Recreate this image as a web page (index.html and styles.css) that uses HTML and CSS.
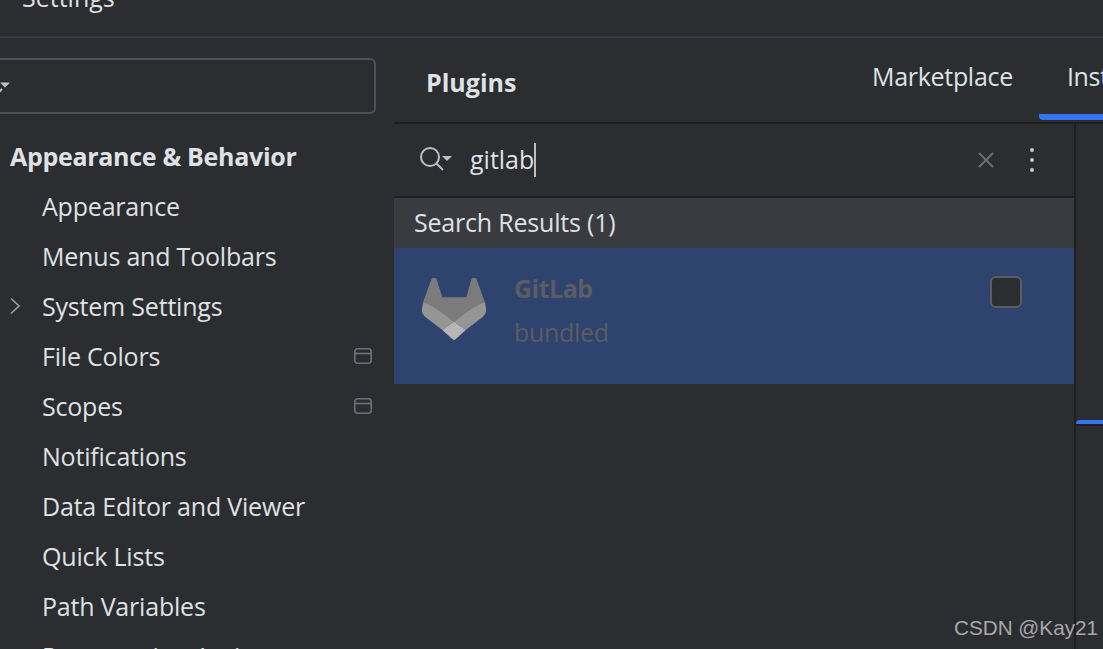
FILE: index.html
```html
<!DOCTYPE html>
<html lang="en">
<head>
  <meta charset="UTF-8">
  <title>Settings - Plugins</title>
  <link rel="stylesheet" href="styles.css">
</head>
<body>

  <!-- Title bar, cut off by the top of the screenshot -->
  <div class="titlebar"><span>Settings</span></div>

  <div class="content">

    <!-- Left settings tree -->
    <div class="sidebar">
      <div class="tree-search">
        <svg class="tree-search-caret" width="12" height="12" viewBox="0 0 12 12">
          <path d="M0 2.500H10L5 7.500Z" fill="#bfc1c6"/>
          <path d="M-1 12L2 9" stroke="#bfc1c6" stroke-width="2" fill="none"/>
        </svg>
      </div>
      <div class="tree-row tree-head">Appearance &amp; Behavior</div>
      <div class="tree-row">Appearance</div>
      <div class="tree-row">Menus and Toolbars</div>
      <div class="tree-row">
        <svg class="tree-arrow" width="12" height="18" viewBox="0 0 12 18">
          <path d="M2 1.500L10 9L2 16.500" stroke="#9a9ca1" stroke-width="1.700" fill="none"/>
        </svg>
        System Settings
      </div>
      <div class="tree-row">
        File Colors
        <svg class="tree-badge" width="20" height="18" viewBox="0 0 20 18">
          <rect x="1.800" y="1.800" width="16.400" height="14.400" rx="3" stroke="#6f7277" stroke-width="1.600" fill="none"/>
          <path d="M2 6.500H18" stroke="#6f7277" stroke-width="1.600"/>
        </svg>
      </div>
      <div class="tree-row">
        Scopes
        <svg class="tree-badge" width="20" height="18" viewBox="0 0 20 18">
          <rect x="1.800" y="1.800" width="16.400" height="14.400" rx="3" stroke="#6f7277" stroke-width="1.600" fill="none"/>
          <path d="M2 6.500H18" stroke="#6f7277" stroke-width="1.600"/>
        </svg>
      </div>
      <div class="tree-row">Notifications</div>
      <div class="tree-row">Data Editor and Viewer</div>
      <div class="tree-row">Quick Lists</div>
      <div class="tree-row">Path Variables</div>
      <div class="tree-row">Presentation Assistant</div>
    </div>

    <!-- Plugins panel -->
    <div class="panel">
      <div class="panel-header">
        <div class="panel-title">Plugins</div>
        <div class="tabs">
          <div class="tab">Marketplace</div>
          <div class="tab tab-active">Installed</div>
        </div>
      </div>

      <div class="panel-body">
        <div class="plugin-list">
          <div class="search-row">
            <svg class="search-icon" width="34" height="28" viewBox="0 0 34 28">
              <circle cx="11" cy="11" r="9" stroke="#bcbec3" stroke-width="2" fill="none"/>
              <path d="M17.500 17.500L24 24" stroke="#bcbec3" stroke-width="2" fill="none"/>
              <path d="M23 10H33L28 15Z" fill="#bcbec3"/>
            </svg>
            <span class="search-text">gitlab</span><span class="caret"></span>
            <svg class="search-clear" width="18" height="18" viewBox="0 0 18 18">
              <path d="M2 2L16 16M16 2L2 16" stroke="#6c6e72" stroke-width="2" fill="none"/>
            </svg>
            <div class="search-more"><i></i><i></i><i></i></div>
          </div>

          <div class="results-head">Search Results (1)</div>

          <div class="plugin-row">
            <svg class="plugin-logo" width="66" height="64" viewBox="0 0 66 64">
              <path d="M14 0.700C15.500 0.700 16.500 1.700 17 3.500L22.300 20.300H46.300L51 3.500C51.500 1.700 52.500 0.700 54 0.700C55.500 0.700 56.500 1.700 57 3.500L65 25.300L34 44.700L3 25.300L11 3.500C11.500 1.700 12.500 0.700 14 0.700Z" fill="#7b7b7b"/>
              <path d="M3 25.300C12 28 22 36 34 44.700L22.300 53L6 40.500C2.500 37.500 1.500 35 2 31.500Z" fill="#959595"/>
              <path d="M65 25.300C56 28 46 36 34 44.700L45.700 53L62 40.500C65.500 37.500 66.500 35 66 31.500Z" fill="#959595"/>
              <path d="M34 44.700L45.700 53L35.500 62.300C34.500 63.200 33.500 63.200 32.500 62.300L22.300 53Z" fill="#b6b6b6"/>
            </svg>
            <div class="plugin-info">
              <div class="plugin-name">GitLab</div>
              <div class="plugin-note">bundled</div>
            </div>
            <div class="plugin-check"></div>
          </div>
        </div>

        <!-- Details pane, only its left edge is visible -->
        <div class="detail">
          <div class="detail-tabs"></div>
          <div class="detail-marker"></div>
          <div class="detail-rule"></div>
        </div>
      </div>
    </div>

  </div>

  <div class="watermark">CSDN @Kay21</div>

</body>
</html>
```

FILE: styles.css
```css
html, body {
  height: 100%;
}

body {
  margin: 0;
  width: 1103px;
  height: 649px;
  overflow: hidden;
  position: relative;
  background: #2b2d30;
  color: #dfe1e5;
  font-family: "Open Sans", "Noto Sans", sans-serif;
  font-size: 25px;
  letter-spacing: -0.2px;
  display: flex;
  flex-direction: column;
}

.titlebar {
  height: 36px;
  flex: none;
  border-bottom: 2px solid #393b40;
  padding-left: 22px;
  overflow: hidden;
  line-height: 1;
  letter-spacing: 0;
}

.titlebar span {
  display: block;
  margin-top: -15px;
}

.content {
  flex: 1;
  display: flex;
  min-height: 0;
}

.sidebar {
  width: 394px;
  flex: none;
  overflow: hidden;
}

.tree-search {
  height: 52px;
  margin: 20px 18px 0 -12px;
  border: 2px solid #4e5157;
  border-radius: 6px;
  display: flex;
  align-items: center;
  padding-left: 10px;
}

.tree-search-caret {
  overflow: visible;
}

.tree-row {
  height: 50px;
  line-height: 48px;
  padding-left: 42px;
  white-space: nowrap;
  position: relative;
}

.tree-head {
  padding-left: 10px;
  font-weight: 700;
  margin-top: 18px;
  letter-spacing: -0.3px;
}

.tree-arrow {
  position: absolute;
  left: 9px;
  top: 15px;
}

.tree-badge {
  position: absolute;
  left: 353px;
  top: 15px;
}

.panel {
  flex: 1;
  min-width: 0;
  display: flex;
  flex-direction: column;
}

.panel-header {
  height: 84px;
  flex: none;
  border-bottom: 2px solid #1e1f22;
  display: flex;
  justify-content: space-between;
  overflow: hidden;
}

.panel-title {
  padding: 26px 0 0 32px;
  font-weight: 700;
  line-height: 36px;
  letter-spacing: 0;
}

.tabs {
  display: flex;
  width: 231px;
  flex: none;
  gap: 54px;
}

.tab {
  padding-top: 20px;
  line-height: 36px;
  letter-spacing: -0.3px;
  white-space: nowrap;
}

.tab-active {
  height: 56px;
  padding-left: 28px;
  margin-left: -28px;
  border-bottom: 6px solid #3574f0;
  border-bottom-left-radius: 4px;
  border-top-left-radius: 4px;
}

.panel-body {
  flex: 1;
  display: flex;
  min-height: 0;
}

.plugin-list {
  width: 680px;
  flex: none;
}

.search-row {
  height: 72px;
  border-bottom: 2px solid #1e1f22;
  display: flex;
  align-items: center;
  padding-left: 25px;
}

.search-icon {
  flex: none;
  margin-right: 17px;
}

.search-text {
  letter-spacing: 0;
  padding-bottom: 2px;
}

.caret {
  width: 2px;
  height: 34px;
  background: #bcbec3;
}

.search-clear {
  margin-left: auto;
  flex: none;
}

.search-more {
  width: 6px;
  margin: 0 38px 0 35px;
  display: flex;
  flex-direction: column;
  gap: 6px;
}

.search-more i {
  display: block;
  width: 4px;
  height: 4px;
  border-radius: 50%;
  background: #c4c6cb;
}

.results-head {
  height: 50px;
  line-height: 48px;
  padding-left: 20px;
  background: #393b40;
}

.plugin-row {
  height: 136px;
  background: #2e436e;
  display: flex;
  align-items: flex-start;
  padding-left: 26px;
}

.plugin-logo {
  flex: none;
  margin: 29px 28px 0 0;
}

.plugin-info {
  flex: 1;
  padding-top: 22px;
  color: #5a5d63;
}

.plugin-name {
  font-weight: 700;
  line-height: 36px;
  letter-spacing: -0.5px;
}

.plugin-note {
  line-height: 36px;
  margin-top: 8px;
  letter-spacing: -0.3px;
}

.plugin-check {
  width: 28px;
  height: 28px;
  margin: 28px 52px 0 0;
  background: #2b2d30;
  border: 2px solid #5a5d63;
  border-radius: 6px;
}

.detail {
  flex: 1;
  border-left: 2px solid #1e1f22;
  min-width: 0;
}

.detail-tabs {
  height: 296px;
}

.detail-marker {
  height: 4px;
  background: #3574f0;
  border-top-left-radius: 4px;
}

.detail-rule {
  height: 2px;
  background: #1e1f22;
}

.watermark {
  position: absolute;
  right: 5px;
  bottom: 7px;
  font-family: "Liberation Sans", sans-serif;
  font-size: 20.7px;
  letter-spacing: 0;
  line-height: 28px;
  color: #a8a8a8;
}
```
